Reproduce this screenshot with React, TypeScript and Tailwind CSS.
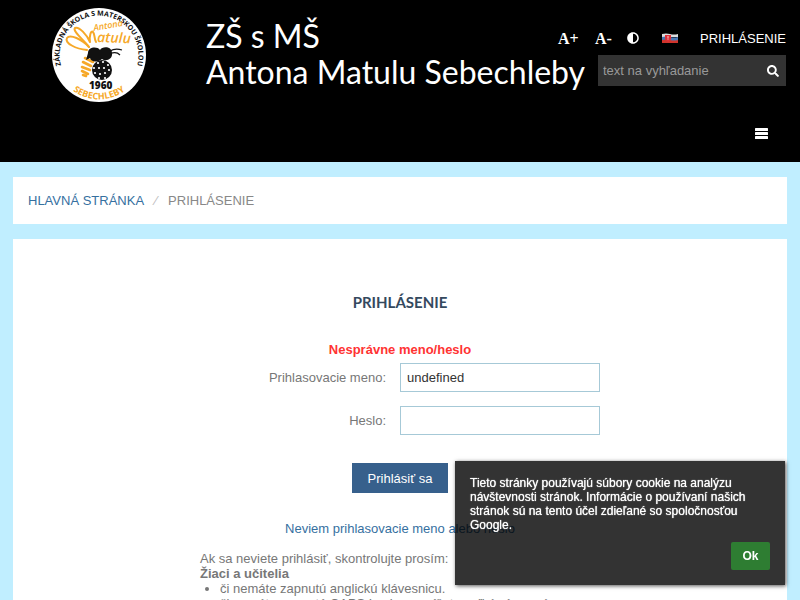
import { FaAdjust, FaSearch } from "react-icons/fa";

function Logo() {
  return (
    <svg viewBox="0 0 94 94" className="size-[94px] shrink-0" role="img" aria-label="Logo školy">
      <defs>
        <path id="arc-top" d="M 13 67 A 39.4 39.4 0 1 1 81 67" />
        <path id="arc-bottom" d="M 12 74 A 44 44 0 0 0 82 74" />
      </defs>
      <circle cx="47" cy="47" r="47" fill="#fff" />
      <g fontFamily="'Open Sans', sans-serif" fontWeight="700">
        <text fill="#111" fontSize="7">
          <textPath href="#arc-top" startOffset="50%" textAnchor="middle">ZÁKLADNÁ ŠKOLA S MATERSKOU ŠKOLOU</textPath>
        </text>
        <text fill="#f6a828" fontSize="9">
          <textPath href="#arc-bottom" startOffset="50%" textAnchor="middle">SEBECHLEBY</textPath>
        </text>
      </g>
      <g fill="none" stroke="#f6a828" strokeWidth="2" strokeLinecap="round" strokeLinejoin="round">
        <path d="M35 42 C24 41 12 35 15 30 C18 26 30 31 37 39" />
        <path d="M37 39 C32 32 20 23 23 20 C27 18 35 27 38 34 C37 28 39 22 41 24 C43 26 42 31 44 34" />
        <path d="M33 50 L41 54 M31 54 L39 58 M30 59 L38 62 M30 63 L36 66 M31 67 L34 68" strokeWidth="2.6" />
      </g>
      <g fill="#f6a828" fontFamily="'Open Sans', sans-serif" fontStyle="italic" fontWeight="600">
        <text x="42" y="23" fontSize="9" transform="rotate(-10 42 23)">Antona</text>
        <text x="45" y="34" fontSize="14" transform="rotate(2 45 34)">atulu</text>
      </g>
      <path d="M36 45 C36 39 45 38 48 42 C50 38 60 38 60 45 C61 51 54 54 50 51 C45 55 39 54 38 50 L34 52 Z" fill="#111" />
      <path d="M58 43 Q63 40 70 42 M58 46 Q64 43 68 47" fill="none" stroke="#111" strokeWidth="1.2" />
      <circle cx="50" cy="62" r="10" fill="#111" />
      <g fill="#fff">
        {[[46, 55], [51, 54], [56, 57], [42, 60], [47, 60], [52, 60], [57, 62], [43, 65], [48, 66], [53, 65], [47, 70], [53, 70]].map(([x, y]) => (
          <circle key={`${x}-${y}`} cx={x} cy={y} r="1.1" />
        ))}
      </g>
      <text x="37" y="81" fontFamily="'Open Sans', sans-serif" fontWeight="800" fontSize="10" fill="#111">1960</text>
    </svg>
  );
}

function SlovakFlag() {
  return (
    <svg viewBox="0 0 16 11" className="h-[11px] w-4">
      <path d="M0 1 Q4 0 8 1 T16 1 V4 H0Z" fill="#ddd" />
      <path d="M0 4 Q4 3 8 4 T16 4 V8 H0Z" fill="#4a78b4" />
      <path d="M0 7 Q4 6 8 7 T16 7 V10 H0Z" fill="#d0342c" />
      <path d="M3 2 H9 V6 Q8 8 6 9 Q4 8 3 6Z" fill="#e0303a" />
      <path d="M6 3 V7 M5 4 H7" stroke="#f4b0b0" strokeWidth="0.8" />
    </svg>
  );
}

function MenuIcon() {
  return (
    <svg viewBox="0 0 13 12" className="h-3 w-[13px]" fill="#fff">
      <rect y="0" width="13" height="3" rx="0.6" />
      <rect y="4" width="13" height="3" rx="0.6" />
      <rect y="8" width="13" height="3" rx="0.6" />
    </svg>
  );
}

const inputClass = "h-[29px] w-[200px] border border-[#a6c9d7] bg-white px-[6px] text-[13px] text-[#333] outline-none";

export default function App() {
  return (
    <div className="min-h-screen bg-[#c0eeff] font-['Liberation_Sans',Arial,sans-serif] text-[13px] leading-[15px] text-[#777]">
      <header className="bg-black text-white">
        <div className="flex h-[105px] items-start justify-between pr-[14px] pl-[52px]">
          <div className="flex min-w-0 flex-1 gap-[60px] pt-2">
            <Logo />
            <h1 className="pt-[10px] font-['Lato',sans-serif] text-[32px] leading-9 whitespace-nowrap">
              ZŠ s MŠ
              <br />
              Antona Matulu Sebechleby
            </h1>
          </div>
          <div className="flex w-[228px] shrink-0 flex-col items-end pt-[28px]">
            <div className="flex h-5 w-full items-center">
              <button className="w-[37px] text-left font-['Liberation_Serif',serif] text-[16px] font-bold">A+</button>
              <button className="w-8 text-left font-['Liberation_Serif',serif] text-[16px] font-bold">A-</button>
              <button className="w-[35px]" aria-label="Kontrast"><FaAdjust size={12} /></button>
              <button aria-label="Slovenčina"><SlovakFlag /></button>
              <a href="#" className="ml-auto">PRIHLÁSENIE</a>
            </div>
            <div className="mt-[7px] flex h-[31px] w-[188px] items-center bg-[#333] pr-[7px] pl-[5px]">
              <input aria-label="Vyhľadávanie" placeholder="text na vyhľadanie" className="min-w-0 flex-1 bg-transparent text-[13px] text-white outline-none placeholder:text-[#999]" />
              <button aria-label="Hľadať"><FaSearch size={12} /></button>
            </div>
          </div>
        </div>
        <nav className="flex h-[57px] items-center justify-end pr-8">
          <button aria-label="Menu"><MenuIcon /></button>
        </nav>
      </header>

      <main className="flex flex-col gap-[15px] px-[13px] pt-[15px]">
        <nav aria-label="Navigácia" className="flex h-[47px] items-center bg-white px-[15px]">
          <a href="#" className="text-[#36709f]">HLAVNÁ STRÁNKA</a>
          <span className="w-6 text-center text-[#bbb]">⁄</span>
          <span className="text-[#888]">PRIHLÁSENIE</span>
        </nav>

        <section className="bg-white pt-[53px] pb-10">
          <h2 className="text-center font-['Lato',sans-serif] text-[15px] leading-5 font-bold text-[#34495e]">PRIHLÁSENIE</h2>
          <form className="mt-[30px] flex flex-col items-center" onSubmit={(e) => e.preventDefault()}>
            <p className="font-bold text-[#f33]">Nesprávne meno/heslo</p>
            <div className="mt-[6px] flex w-[400px] items-center justify-end gap-[14px]">
              <label htmlFor="login">Prihlasovacie meno:</label>
              <input id="login" defaultValue="undefined" className={inputClass} />
            </div>
            <div className="mt-[14px] flex w-[400px] items-center justify-end gap-[14px]">
              <label htmlFor="password">Heslo:</label>
              <input id="password" type="password" className={inputClass} />
            </div>
            <button className="mt-7 h-[30px] w-24 bg-[#37608c] text-[13px] text-white">Prihlásiť sa</button>
            <a href="#" className="mt-7 text-[#36709f]">Neviem prihlasovacie meno alebo heslo</a>
          </form>
          <div className="mx-auto mt-[15px] w-[400px]">
            <p>Ak sa neviete prihlásiť, skontrolujte prosím:</p>
            <p className="font-bold">Žiaci a učitelia</p>
            <ul className="list-disc pl-5">
              <li>či nemáte zapnutú anglickú klávesnicu.</li>
              <li>či nemáte zapnutú CAPS Lock a nepíšete veľké písmená omylom.</li>
            </ul>
          </div>
        </section>
      </main>

      <aside className="fixed right-[15px] bottom-[15px] flex w-[330px] flex-col bg-black/80 p-[15px] text-white shadow-[1px_1px_4px_#000a]">
        <p className="text-[12px] leading-[14px] [text-shadow:0_0_1px_#fff]">
          Tieto stránky používajú súbory cookie na analýzu návštevnosti stránok. Informácie o používaní našich stránok sú na tento účel zdieľané so spoločnosťou Google.
        </p>
        <button className="mt-[10px] h-7 w-[39px] self-end rounded-[2px] bg-[#2e7d32] text-[12px] font-bold">Ok</button>
      </aside>
    </div>
  );
}
